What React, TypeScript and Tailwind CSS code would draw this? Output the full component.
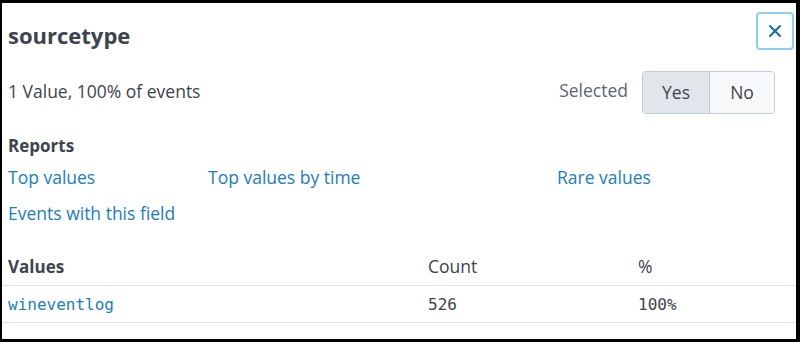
import { X } from "lucide-react";

const sans = "font-['Open_Sans','Lato',sans-serif]";

export default function App() {
  return (
    <div className={`w-[800px] h-[342px] bg-white border-black border-t-[3px] border-l-2 border-r-4 border-b-[3px] overflow-hidden text-[#3c444d] ${sans}`}>
      <div className="flex justify-between items-start pl-[6px] pr-[2px] pt-[9px]">
        <h1 className="mt-[10px] text-[22px] font-bold leading-[26px] text-[#3c444d]">sourcetype</h1>
        <button className="w-[38px] h-[38px] flex items-center justify-center rounded-[4px] border-2 border-[#8ecdf5] bg-white text-[#1a6fa8]">
          <X size={20} strokeWidth={2.5} />
        </button>
      </div>

      <div className="flex justify-between items-center pl-[6px] pr-[21px] mt-[21px]">
        <span className="text-[17.5px] leading-[24px] -mt-[3px]">1 Value, 100% of events</span>
        <div className="flex items-center">
          <span className="text-[17.5px] leading-[24px] text-[#5c6773] mr-[14px] -mt-[6px]">Selected</span>
          <div className="flex h-[43px] rounded-[4px] border border-[#c3cbd4] overflow-hidden text-[17.5px]">
            <button className="w-[67px] bg-[#e1e6eb] border-r border-[#c3cbd4] text-[#3c444d]">Yes</button>
            <button className="w-[64px] bg-[#f7f8fa] text-[#3c444d]">No</button>
          </div>
        </div>
      </div>

      <div className="pl-[6px] mt-[21px]">
        <h2 className="text-[17px] font-bold leading-[22px]">Reports</h2>
        <div className="grid grid-cols-[200px_349px_200px] text-[17.5px] text-[#1a7dc2] mt-[9px] leading-[22px]">
          <a>Top values</a>
          <a>Top values by time</a>
          <a>Rare values</a>
        </div>
        <div className="text-[17.5px] text-[#1a7dc2] mt-[14px] leading-[22px]">
          <a>Events with this field</a>
        </div>
      </div>

      <table className="w-full mt-[24px] border-collapse text-left">
        <thead>
          <tr className="border-b border-[#dce3ea]">
            <th className="pl-[6px] w-[426px] h-[37px] text-[17px] font-bold align-middle">Values</th>
            <th className="w-[210px] font-normal text-[17.5px]">Count</th>
            <th className="font-normal text-[17.5px]">%</th>
          </tr>
        </thead>
        <tbody>
          <tr className="border-b border-[#dce3ea] font-['DejaVu_Sans_Mono',monospace] text-[16px]">
            <td className="pl-[6px] pt-[2px] h-[37px] text-[#1a7dc2]">wineventlog</td>
            <td className="pt-[2px]">526</td>
            <td className="pt-[2px]">100%</td>
          </tr>
        </tbody>
      </table>
    </div>
  );
}
